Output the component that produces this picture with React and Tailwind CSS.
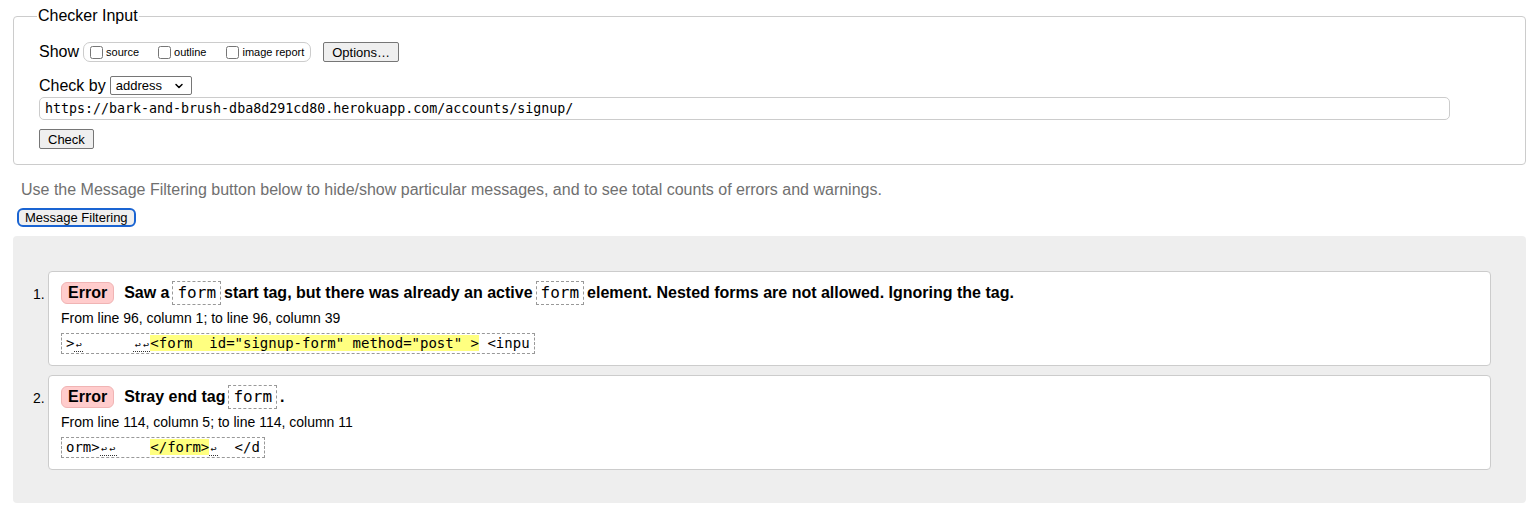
import { ChevronDown } from 'lucide-react';

const sans = { fontFamily: '"Liberation Sans", Arial, sans-serif' };

const Code = ({ children }) => (
    <code className="inline-block border border-dashed border-[#999] px-[4px] mx-[3px] font-['DejaVu_Sans_Mono',monospace] font-normal text-[16px] leading-[22px]">
        {children}
    </code>
);

// line feed marker, one char wide with a dotted underline
const Lf = ({ n = 1 }) => (
    <span className="border-b border-dotted border-[#333]">
        {Array.from({ length: n }).map((_, i) => (
            <span key={i} className="inline-block w-[8.43px] text-center text-[10px] leading-[14px]">↩</span>
        ))}
    </span>
);

const ErrorItem = ({ num, message, location, extract }) => (
    <li className="flex">
        <span className="w-[35px] shrink-0 pt-[13px] pl-[20px] text-[14px]">{num}.</span>
        <div className="flex-1 bg-white border border-[#ccc] rounded-[4px] px-[12px] pt-[8px] pb-[10px]">
            <div className="flex items-center text-[16px] font-bold leading-[26px]">
                <span className="bg-[#fcc] border border-[#f0b4b4] rounded-[6px] px-[6px] leading-[20px] mr-[10px]">Error</span>
                <span>{message}</span>
            </div>
            <p className="text-[14px] leading-[16px] mt-[4px]">{location}</p>
            <div className="mt-[7px] inline-block border border-dashed border-[#999] px-[4px] font-['DejaVu_Sans_Mono',monospace] text-[14px] leading-[19px] whitespace-pre">
                {extract}
            </div>
        </div>
    </li>
);

export default function App() {
    return (
        <div className="bg-white text-black pl-[13px] pr-[8px] pt-[7px] pb-[9px]" style={sans}>
            <fieldset className="border border-[#ccc] rounded-[4px] pl-[25px] pr-[25px] pb-[15px]">
                <legend className="text-[16px] leading-[18px] px-[1px] -ml-[2px]">Checker Input</legend>
                <div className="flex items-center mt-[17px] h-[20px]">
                    <span className="text-[16px]">Show</span>
                    <div className="ml-[4px] flex items-center h-[20px] border border-[#ccc] rounded-[7px] pl-[6px] pr-[6px] text-[11px]">
                        <input type="checkbox" className="w-[13px] h-[13px] mr-[3px]" />
                        <span className="mr-[19px]">source</span>
                        <input type="checkbox" className="w-[13px] h-[13px] mr-[3px]" />
                        <span className="mr-[20px]">outline</span>
                        <input type="checkbox" className="w-[13px] h-[13px] mr-[3px]" />
                        <span>image report</span>
                    </div>
                    <button className="ml-[12px] h-[20px] px-[8px] text-[13px] bg-[#efefef] border border-[#767676] rounded-[2px]">
                        Options…
                    </button>
                </div>
                <div className="flex items-center mt-[14px] h-[19px]">
                    <span className="text-[16px]">Check by</span>
                    <div className="ml-[4px] w-[82px] h-[19px] flex items-center justify-between border border-[#767676] rounded-[2px] pl-[5px] pr-[6px] text-[13px]">
                        <span>address</span>
                        <ChevronDown size={12} strokeWidth={3} />
                    </div>
                </div>
                <div className="mt-[2px] w-[1411px] h-[23px] flex items-center border border-[#ccc] rounded-[5px] px-[5px] font-['DejaVu_Sans_Mono',monospace] text-[13.3px]">
                    https://bark-and-brush-dba8d291cd80.herokuapp.com/accounts/signup/
                </div>
                <button className="mt-[9px] h-[20px] px-[8px] text-[13px] bg-[#efefef] border border-[#767676] rounded-[2px] block">
                    Check
                </button>
            </fieldset>
            <p className="mt-[16px] pl-[8px] text-[16px] leading-[18px] text-[#707070]">
                Use the Message Filtering button below to hide/show particular messages, and to see total counts of errors and warnings.
            </p>
            <button className="mt-[9px] ml-[4px] h-[19px] px-[6px] text-[13px] leading-[15px] bg-[#efefef] border-2 border-[#1a64d2] rounded-[6px] block">
                Message Filtering
            </button>
            <div className="mt-[9px] bg-[#eee] rounded-[4px] pt-[35px] pb-[33px] pr-[35px]">
                <ol className="flex flex-col gap-[9px]">
                    <ErrorItem
                        num="1"
                        message={
                            <>
                                Saw a<Code>form</Code>start tag, but there was already an active<Code>form</Code>element. Nested forms are not allowed. Ignoring the tag.
                            </>
                        }
                        location="From line 96, column 1; to line 96, column 39"
                        extract={
                            <>
                                {'>'}<Lf />{'      '}<Lf n={2} />
                                <span className="bg-[#ffff80]">{'<form  id="signup-form" method="post" >'}</span>
                                {' <inpu'}
                            </>
                        }
                    />
                    <ErrorItem
                        num="2"
                        message={
                            <>
                                Stray end tag<Code>form</Code>.
                            </>
                        }
                        location="From line 114, column 5; to line 114, column 11"
                        extract={
                            <>
                                {'orm>'}<Lf n={2} />{'    '}
                                <span className="bg-[#ffff80]">{'</form>'}</span>
                                <Lf />{'  </d'}
                            </>
                        }
                    />
                </ol>
            </div>
        </div>
    );
}
